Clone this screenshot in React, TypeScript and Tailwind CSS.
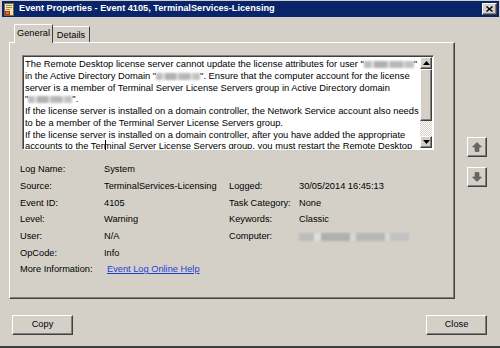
import React from 'react';

const raised =
  'border border-t-white border-l-white border-r-[#404040] border-b-[#404040] shadow-[inset_-1px_-1px_0_#808080]';

const Blur: React.FC<{ className: string }> = ({ className }) => (
  <span
    className={`inline-block align-middle blur-[1.1px] bg-[linear-gradient(90deg,#bdbdbd_0_14%,#dedede_14%_20%,#b0b0b0_20%_46%,#d6d6d6_46%_52%,#b7b7b7_52%_78%,#d8d8d8_78%_83%,#c2c2c2_83%_100%)] ${className}`}
  />
);

const TitleIcon = () => (
  <svg width="12" height="13" viewBox="0 0 12 13">
    <rect x="1.5" y="0.5" width="9" height="12" fill="#f2e6b0" stroke="#7a6a3a" />
    <rect x="3" y="2" width="6" height="1" fill="#9a8a5a" />
    <rect x="3" y="4" width="6" height="1" fill="#9a8a5a" />
    <rect x="3" y="6" width="4" height="1" fill="#9a8a5a" />
    <rect x="2" y="8" width="5" height="4" fill="#c8281e" />
    <rect x="3" y="9" width="3" height="2" fill="#f07050" />
  </svg>
);

const BlockArrow: React.FC<{ down?: boolean }> = ({ down }) => (
  <svg width="10" height="10" viewBox="0 0 10 10" className={down ? 'rotate-180' : ''}>
    <polygon points="5,0.5 9.5,5 7,5 7,9.5 3,9.5 3,5 0.5,5" fill="#666" stroke="#555" strokeWidth="0.6" />
  </svg>
);

const Tri: React.FC<{ down?: boolean }> = ({ down }) => (
  <svg width="7" height="4" viewBox="0 0 7 4">
    <polygon points={down ? '0,0 7,0 3.5,4' : '3.5,0 7,4 0,4'} fill="#000" />
  </svg>
);

const rows: [string, React.ReactNode, string?, React.ReactNode?][] = [
  ['Log Name:', 'System'],
  ['Source:', 'TerminalServices-Licensing', 'Logged:', '30/05/2014 16:45:13'],
  ['Event ID:', '4105', 'Task Category:', 'None'],
  ['Level:', 'Warning', 'Keywords:', 'Classic'],
  ['User:', 'N/A', 'Computer:', <Blur key="c" className="w-[110px] h-[8px]" />],
  ['OpCode:', 'Info'],
];

const App: React.FC = () => {
  return (
    <div className="w-[500px] h-[348px] bg-[#d4d0c8] flex flex-col pt-[1px] pl-[2px] pr-[1px] border-b-2 border-b-[#404040] font-['Liberation_Sans',Arial,sans-serif] text-black text-[9.25px] overflow-hidden">
      {/* title bar */}
      <div className="h-[16px] bg-[#0a246a] flex items-center pl-[1px] pr-[2px] shrink-0">
        <TitleIcon />
        <span className="ml-[4px] text-white font-bold text-[9.2px] whitespace-nowrap">
          Event Properties - Event 4105, TerminalServices-Licensing
        </span>
        <div className={`ml-auto w-[15px] h-[12px] bg-[#d4d0c8] flex items-center justify-center ${raised}`}>
          <svg width="7" height="6" viewBox="0 0 7 6">
            <path d="M0.5 0.5 L6.5 5.5 M6.5 0.5 L0.5 5.5" stroke="#000" strokeWidth="1.4" />
          </svg>
        </div>
      </div>

      <div className="flex pl-[7px]">
        <div className="w-[446px] flex flex-col mt-[7px]">
          {/* tabs */}
          <div className="flex items-end pl-[5px] h-[18px] relative z-10">
            <div className="w-[39px] h-[19px] mb-[-1px] bg-[#d4d0c8] border-t border-l border-r border-t-white border-l-white border-r-[#404040] flex justify-center pt-[2px]">
              General
            </div>
            <div className="w-[37px] h-[16px] border-t border-r border-t-white border-r-[#404040] flex justify-center pt-[2px]">
              Details
            </div>
          </div>

          {/* panel */}
          <div className="h-[257px] border border-t-white border-l-white border-r-[#404040] border-b-[#404040] shadow-[inset_-1px_-1px_0_#808080] pl-[12px] pt-[12px]">
            <div className="w-[412px] h-[95px] bg-white border border-t-[#808080] border-l-[#808080] border-r-white border-b-white shadow-[inset_1px_1px_0_#404040] flex relative">
              <div className="flex-1 overflow-hidden pl-[2px] pt-[3px] leading-[11.76px] whitespace-nowrap text-[9.35px]">
                <div>
                  The Remote Desktop license server cannot update the license attributes for user "<Blur className="w-[50px] h-[7px]" />"
                </div>
                <div>
                  in the Active Directory Domain "<Blur className="w-[44px] h-[7px]" />". Ensure that the computer account for the license
                </div>
                <div>server is a member of Terminal Server License Servers group in Active Directory domain</div>
                <div>
                  "<Blur className="w-[44px] h-[7px]" />".
                </div>
                <div>If the license server is installed on a domain controller, the Network Service account also needs</div>
                <div>to be a member of the Terminal Server License Servers group.</div>
                <div>If the license server is installed on a domain controller, after you have added the appropriate</div>
                <div>accounts to the Terminal Server License Servers group, you must restart the Remote Desktop</div>
              </div>
              <span className="absolute left-[82px] top-[84px] w-[1px] h-[10px] bg-black" />
              {/* scrollbar */}
              <div className="w-[12px] flex flex-col mt-[1px] mb-[1px] mr-[1px]">
                <div className={`h-[12px] bg-[#d4d0c8] flex items-center justify-center ${raised}`}>
                  <Tri />
                </div>
                <div className={`h-[52px] bg-[#d4d0c8] ${raised}`} />
                <div className="flex-1 bg-[repeating-conic-gradient(#ffffff_0_25%,#d4d0c8_0_50%)] bg-[length:2px_2px]" />
                <div className={`h-[12px] bg-[#d4d0c8] flex items-center justify-center ${raised}`}>
                  <Tri down />
                </div>
              </div>
            </div>

            {/* details */}
            <div className="mt-[12px] -ml-[2px] grid grid-cols-[84px_125px_70px_1fr] auto-rows-[16.67px] items-center whitespace-nowrap">
              {rows.map(([a, b, c, d], i) => (
                <React.Fragment key={i}>
                  <div>{a}</div>
                  <div>{b}</div>
                  <div>{c ?? ''}</div>
                  <div>{d ?? ''}</div>
                </React.Fragment>
              ))}
              <div>More Information:</div>
              <div className="col-span-3">
                <span className="ml-[3px] text-[#1f3fd6] underline">Event Log Online Help</span>
              </div>
            </div>
          </div>
        </div>

        {/* side arrows */}
        <div className="ml-[12px] mt-[120px] flex flex-col gap-[10px]">
          <div className={`w-[20px] h-[20px] bg-[#d4d0c8] flex items-center justify-center ${raised}`}>
            <BlockArrow />
          </div>
          <div className={`w-[20px] h-[20px] bg-[#d4d0c8] flex items-center justify-center ${raised}`}>
            <BlockArrow down />
          </div>
        </div>
      </div>

      {/* footer */}
      <div className="flex justify-between pl-[10px] pr-[12px] mt-[16px]">
        <button className={`w-[61px] h-[20px] bg-[#d4d0c8] flex items-center justify-center ${raised}`}>Copy</button>
        <button className={`w-[61px] h-[20px] bg-[#d4d0c8] flex items-center justify-center ${raised}`}>Close</button>
      </div>
    </div>
  );
};

export default App;
